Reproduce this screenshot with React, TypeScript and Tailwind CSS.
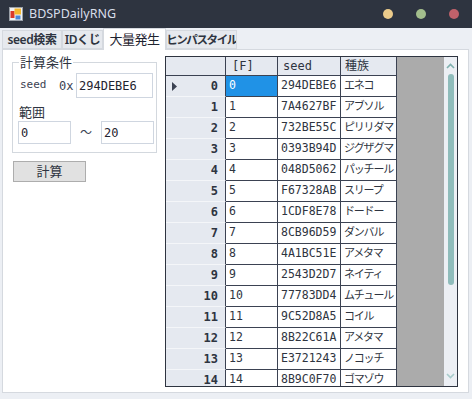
import React from "react";

const rows: [string, string][] = [
  ["294DEBE6", "エネコ"],
  ["7A4627BF", "アブソル"],
  ["732BE55C", "ピリリダマ"],
  ["0393B94D", "ジグザグマ"],
  ["048D5062", "パッチール"],
  ["F67328AB", "スリープ"],
  ["1CDF8E78", "ドードー"],
  ["8CB96D59", "ダンバル"],
  ["4A1BC51E", "アメタマ"],
  ["2543D2D7", "ネイティ"],
  ["77783DD4", "ムチュール"],
  ["9C52D8A5", "コイル"],
  ["8B22C61A", "アメタマ"],
  ["E3721243", "ノコッチ"],
  ["8B9C0F70", "ゴマゾウ"],
];

const mono = "font-['DejaVu_Sans_Mono','Noto_Sans_CJK_JP',monospace]";
const jp = "font-['Noto_Sans','Noto_Sans_CJK_JP',sans-serif]";

function AppIcon() {
  return (
    <svg width="14" height="14" viewBox="0 0 14 14">
      <rect x="0.5" y="0.5" width="13" height="13" fill="#f2f2f2" stroke="#9aa0a8" />
      <rect x="1.5" y="4" width="4" height="7" fill="#d93a2b" />
      <rect x="5.5" y="1.5" width="6.5" height="6" fill="#f5b82e" />
      <rect x="6.5" y="8.5" width="5" height="4" fill="#4a88d8" />
    </svg>
  );
}

function Chevron({ up }: { up?: boolean }) {
  return (
    <svg width="9" height="6" viewBox="0 0 9 6">
      <path
        d={up ? "M1 5 L4.5 1.5 L8 5" : "M1 1 L4.5 4.5 L8 1"}
        fill="none"
        stroke={up ? "#7fb0ae" : "#a8cccb"}
        strokeWidth="1.6"
      />
    </svg>
  );
}

function Tab({ label, w, text, active }: { label: string; w: string; text?: string; active?: boolean }) {
  if (active) {
    return (
      <div className={`${w} h-[22px] -mb-[1px] bg-white border border-b-0 border-[#d5d9df] flex items-center justify-center whitespace-nowrap text-[13px] tracking-[-0.5px] text-[#1f2430] z-10 ${jp}`}>
        {label}
      </div>
    );
  }
  return (
    <div className={`${w} h-[19px] bg-[#e6e9ee] border border-[#d5d9df] flex items-center justify-center whitespace-nowrap overflow-hidden font-semibold text-[#2e3440] ${text} ${jp}`}>
      {label}
    </div>
  );
}

export default function App() {
  return (
    <div className="w-[472px] h-[399px] bg-[#eceff4] flex flex-col overflow-hidden">
      {/* Title bar */}
      <div className="h-[28px] bg-[#2e3440] flex items-center pl-[9px] pr-[13px] shrink-0">
        <AppIcon />
        <span className={`ml-[6px] text-[12.5px] text-[#d8dee9] ${jp}`}>BDSPDailyRNG</span>
        <div className="ml-auto flex items-center gap-[23px]">
          <span className="w-[10px] h-[10px] rounded-full bg-[#ebcb8b]" />
          <span className="w-[10px] h-[10px] rounded-full bg-[#a3be8c]" />
          <span className="w-[10px] h-[10px] rounded-full bg-[#bf616a]" />
        </div>
      </div>

      {/* Tabs */}
      <div className="h-[21px] flex items-end pl-[2px] shrink-0">
        <Tab label="seed検索" w="w-[60px]" text="text-[12px] tracking-[-0.4px]" />
        <Tab label="IDくじ" w="w-[41px]" text="text-[12px] tracking-[-0.4px]" />
        <Tab label="大量発生" w="w-[63px]" active />
        <Tab label="ヒンパスタイル" w="w-[71px]" text="text-[11.5px] tracking-[-1.4px]" />
      </div>

      {/* Panel */}
      <div className="ml-[2px] mr-[3px] mb-[6px] h-[344px] bg-white border border-[#d5d9df] flex">
        {/* Left column */}
        <div className="w-[162px] pl-[9px] pt-[12px] shrink-0">
          <div className="relative w-[145px] h-[91px] border border-[#d3d8de]">
            <span className={`absolute -top-[10px] left-[6px] bg-white px-[1px] text-[13px] leading-[18px] text-[#2e3440] ${jp}`}>
              計算条件
            </span>
            <div className="flex items-center mt-[10px] pl-[7px]">
              <span className={`w-[39px] text-[11px] text-[#3b4252] ${mono}`}>seed</span>
              <span className={`w-[17px] text-[12px] text-[#3b4252] ${mono}`}>0x</span>
              <div className={`w-[77px] h-[25px] border border-[#cfd6e0] flex items-center pl-[2px] text-[12px] text-[#1f2430] ${mono}`}>
                294DEBE6
              </div>
            </div>
            <div className={`mt-[6px] pl-[6px] text-[13px] leading-[16px] text-[#2e3440] ${jp}`}>範囲</div>
            <div className="flex items-center mt-[1px] pl-[5px]">
              <div className={`w-[53px] h-[23px] border border-[#cfd6e0] flex items-center pl-[2px] text-[12px] text-[#1f2430] ${mono}`}>
                0
              </div>
              <span className={`w-[30px] text-center text-[12px] text-[#3b4252] ${jp}`}>〜</span>
              <div className={`w-[53px] h-[23px] border border-[#cfd6e0] flex items-center pl-[2px] text-[12px] text-[#1f2430] ${mono}`}>
                20
              </div>
            </div>
          </div>
          <button className={`mt-[8px] ml-[1px] w-[73px] h-[21px] bg-[#e1e1e1] border border-[#adadad] text-[13px] text-[#2e3440] flex items-center justify-center ${jp}`}>
            計算
          </button>
        </div>

        {/* Data grid */}
        <div className="mt-[6px] w-[293px] h-[331px] border border-[#2e3440] flex overflow-hidden">
          <div className="flex-1 bg-[#ababab] overflow-hidden">
            {/* Header */}
            <div className={`flex h-[19px] text-[12px] text-[#2e3440] ${mono}`}>
              <div className="w-[60px] bg-[#e5e9f0] border-r border-b border-[#3b4252]" />
              <div className="w-[52px] bg-[#e5e9f0] border-r border-b border-[#3b4252] pl-[6px] leading-[18px]">[F]</div>
              <div className="w-[63px] bg-[#e5e9f0] border-r border-b border-[#3b4252] pl-[5px] leading-[18px]">seed</div>
              <div className="w-[56px] bg-[#e5e9f0] border-r border-b border-[#3b4252] pl-[4px] leading-[18px]">種族</div>
            </div>
            {rows.map(([seed, name], i) => (
              <div key={i} className={`flex h-[21px] text-[11.5px] text-[#2e3440] ${mono}`}>
                <div className="w-[60px] bg-[#e5e9f0] border-r border-r-[#3b4252] border-b border-b-[#f4f6f9] flex items-center pr-[7px] pl-[6px]">
                  {i === 0 && (
                    <svg width="5" height="9" viewBox="0 0 5 9">
                      <path d="M0 0 L5 4.5 L0 9 Z" fill="#3b4252" />
                    </svg>
                  )}
                  <span className="ml-auto font-bold text-[12px]">{i}</span>
                </div>
                <div
                  className={`w-[52px] border-r border-b border-[#3b4252] pl-[3px] flex items-center ${
                    i === 0 ? "bg-[#2092e6] text-white" : "bg-white"
                  }`}
                >
                  {i}
                </div>
                <div className="w-[63px] bg-white border-r border-b border-[#3b4252] pl-[3px] flex items-center">{seed}</div>
                <div className="w-[56px] bg-white border-r border-b border-[#3b4252] pl-[3px] flex items-center whitespace-nowrap overflow-hidden text-[11px] tracking-[-1.2px]">
                  {name}
                </div>
              </div>
            ))}
          </div>
          {/* Scrollbar */}
          <div className="w-[13px] bg-[#eceff4] flex flex-col items-center">
            <div className="mt-[5px] h-[8px] flex items-center">
              <Chevron up />
            </div>
            <div className="mt-[4px] w-[6px] h-[211px] rounded-full bg-[#8fbcbb]" />
            <div className="mt-auto mb-[6px] h-[8px] flex items-center">
              <Chevron />
            </div>
          </div>
        </div>
      </div>
    </div>
  );
}
